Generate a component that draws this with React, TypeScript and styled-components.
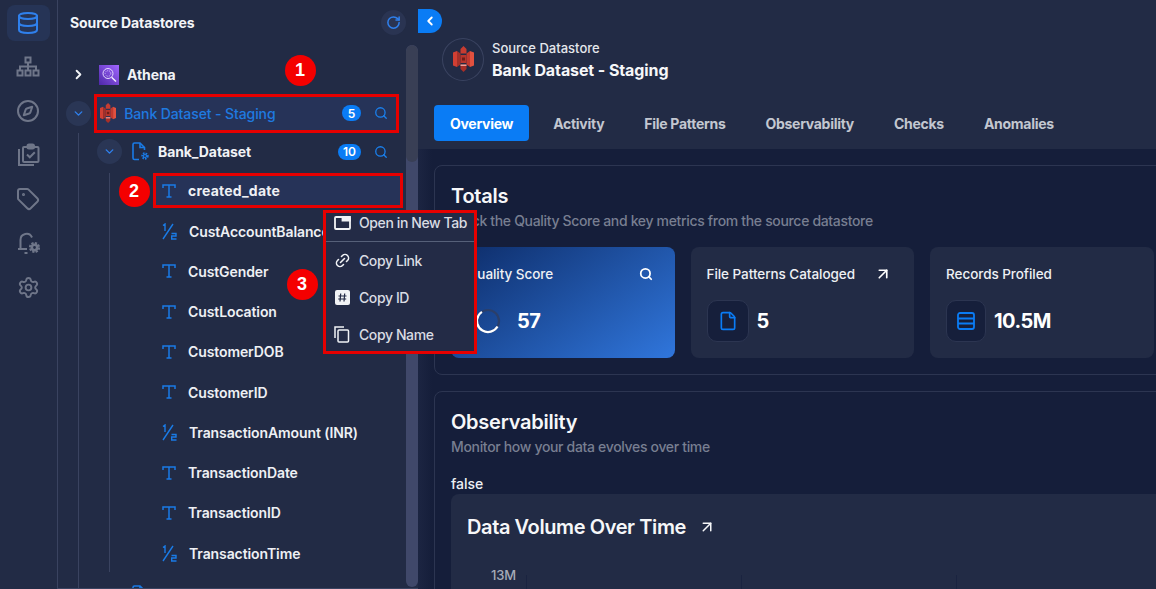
import React from 'react';
import styled, { createGlobalStyle } from 'styled-components';
import { ChevronRight, ChevronDown, ChevronLeft, Database, Compass, Tag, Settings, Search, RotateCw, ArrowUpRight, File, Link2 } from 'lucide-react';

const Global = createGlobalStyle`
  html, body { margin: 0; padding: 0; height: 589px; overflow: hidden; background: #222b45; }
  * { box-sizing: border-box; }
  body { font-family: "Inter", "Noto Sans", sans-serif; color: #f1f3f6; }
`;

const Page = styled.div`
  position: relative; display: flex; width: 1156px; height: 589px; overflow: hidden; background: #222b45;
`;
const Rail = styled.nav`
  flex: 0 0 58px; display: flex; flex-direction: column; align-items: center; gap: 8px;
  padding-top: 5px; border-right: 1px solid #3a4360;
`;
const RailItem = styled.div<{ $active?: boolean }>`
  width: 43px; height: 36px; border-radius: 8px; display: flex; align-items: center; justify-content: center;
  margin-left: -1px;
  color: ${p => (p.$active ? '#2f80ed' : '#6f7689')};
  background: ${p => (p.$active ? '#263456' : 'transparent')};
`;
const Sidebar = styled.aside`
  flex: 0 0 360px; display: flex; height: 589px; border-bottom: 1px solid #3a4360; overflow: hidden;
`;
const TreeColumn = styled.div`
  flex: 0 0 348px; min-width: 0;
`;
const SideHeader = styled.div`
  height: 44px; display: flex; align-items: center; justify-content: space-between; padding-left: 12px;
`;
const SideTitle = styled.h2`
  margin: 0; font-size: 14px; font-weight: 700; letter-spacing: -0.1px; color: #f3f5f8;
`;
const RoundButton = styled.div`
  width: 25px; height: 25px; border-radius: 50%; background: #2a3452; color: #2f80ed;
  display: flex; align-items: center; justify-content: center;
`;
const Tree = styled.div`
  padding: 11.5px 7px 0 8px;
`;
const Row = styled.div`
  display: flex; align-items: center; height: 38.5px;
`;
const Toggle = styled.div<{ $filled?: boolean }>`
  flex: 0 0 25px; height: 25px; border-radius: 50%; display: flex; align-items: center; justify-content: center;
  color: ${p => (p.$filled ? '#2f80ed' : '#f1f3f6')};
  background: ${p => (p.$filled ? '#2a3655' : 'transparent')};
`;
const RowBody = styled.div<{ $boxed?: boolean; $left?: number }>`
  flex: 1; height: 39px; display: flex; align-items: center; min-width: 0;
  margin-left: ${p => p.$left ?? 3}px; padding: 0 11px 0 5px; gap: 8px;
  ${p => p.$boxed && 'background: #263358; border: 3px solid #e60000; padding-left: 3px; padding-right: 8px;'}
`;
const RowLabel = styled.span<{ $blue?: boolean }>`
  flex: 1; font-size: 14px; font-weight: ${p => (p.$blue ? 500 : 700)}; white-space: nowrap; letter-spacing: -0.1px;
  color: ${p => (p.$blue ? '#1f7ae0' : '#f1f3f6')};
`;
const Count = styled.span`
  min-width: 19px; height: 16px; padding: 0 5px; border-radius: 8px; background: #0a7cf5; color: #fff;
  font-size: 12px; font-weight: 600; display: flex; align-items: center; justify-content: center; margin-right: 5px;
`;
const SearchMark = styled.span`
  color: #1a80ee; display: flex; width: 14px;
`;
const Children = styled.div`
  margin-left: 12px; border-left: 1px solid #3a4360; padding-left: 18px;
`;
const Leaves = styled.div`
  margin-left: 12px; border-left: 1px solid #3a4360; padding-left: 43px; margin-bottom: 3px; height: 399px;
`;
const Leaf = styled.div<{ $boxed?: boolean }>`
  display: flex; align-items: center; gap: 12px; height: 40.25px; padding-left: 9px;
  ${p => p.$boxed && 'height: 35px; margin: 2px -4px 3px 0; padding-left: 6px; background: #263358; border: 3px solid #e60000;'}
`;
const LeafIcon = styled.span`
  flex: 0 0 14px; display: flex; justify-content: center;
`;
const LeafLabel = styled.span<{ $boxed?: boolean }>`
  font-size: 14px; font-weight: ${p => (p.$boxed ? 700 : 600)}; letter-spacing: ${p => (p.$boxed ? '0.2px' : '-0.1px')}; white-space: nowrap; color: #eef0f4;
`;
const Scroll = styled.div`
  flex: 0 0 12px; margin-top: 45px; height: 542px; border-radius: 6px; background: #40486a; overflow: hidden;
`;
const ScrollThumb = styled.div`
  height: 117px; background: #393f55; border-radius: 6px;
`;
const Main = styled.main`
  position: relative; flex: 1; min-width: 0; display: flex; flex-direction: column; overflow: hidden;
`;
const CollapseTab = styled.div`
  position: absolute; left: 0; top: 9px; width: 24px; height: 24px; background: #0a7cf5; color: #fff;
  border-radius: 0 12px 12px 0; display: flex; align-items: center; justify-content: center;
`;
const Header = styled.header`
  flex: none; height: 149px; padding-top: 38px; background: #222b45;
`;
const Identity = styled.div`
  display: flex; align-items: center; gap: 8px; padding-left: 24px; height: 42px;
`;
const LogoRing = styled.div`
  width: 42px; height: 43px; flex: none; border-radius: 50%; border: 1px solid #3a4360; display: flex; align-items: center; justify-content: center;
`;
const IdText = styled.div`
  display: flex; flex-direction: column; gap: 3px;
`;
const IdKicker = styled.div`
  font-size: 13px; font-weight: 500; color: #e4e7ec; line-height: 18px; letter-spacing: 0;
`;
const IdName = styled.div`
  font-size: 16px; font-weight: 700; color: #f6f7f9; line-height: 20px; letter-spacing: -0.1px;
`;
const Tabs = styled.div`
  display: flex; gap: 8px; padding-left: 16px; margin-top: 25px;
`;
const TabItem = styled.div<{ $active?: boolean }>`
  height: 36px; padding: 0 16px; border-radius: 4px; display: flex; align-items: center;
  font-size: 14px; font-weight: 700; letter-spacing: -0.28px; white-space: nowrap;
  color: ${p => (p.$active ? '#fff' : '#c3c7d0')};
  background: ${p => (p.$active ? '#0a7cf5' : 'transparent')};
`;
const Content = styled.div`
  flex: 1; width: 800px; padding: 16px; background: linear-gradient(90deg, #1c2542 0, #151e3a 14px); display: flex; flex-direction: column; gap: 16px;
`;
const Section = styled.section`
  width: 770px; border: 1px solid #2c3551; border-radius: 8px; padding: 16px; flex: none;
`;
const SectionTitle = styled.h3`
  margin: 0; font-size: 20px; line-height: 28px; font-weight: 600; color: #f6f7f9; letter-spacing: -0.25px;
`;
const SectionSub = styled.p`
  margin: 1px 0 0; font-size: 14px; line-height: 20px; font-weight: 500; color: #787f91; white-space: nowrap; letter-spacing: -0.33px;
`;
const Stats = styled.div`
  display: grid; grid-template-columns: repeat(3, 223.5px); gap: 16px; margin-top: 16px;
`;
const Stat = styled.div<{ $hero?: boolean }>`
  height: 111px; border-radius: 8px; padding: 16px;
  background: ${p => (p.$hero ? 'linear-gradient(145deg, #0d2c68 0%, #3076dc 100%)' : '#222b45')};
`;
const StatHead = styled.div`
  display: flex; justify-content: space-between; align-items: center; height: 22px; font-size: 13.5px; font-weight: 500; color: #eef0f4; white-space: nowrap; letter-spacing: -0.05px;
`;
const HeadAction = styled.span`
  display: flex; padding-right: 6px; color: #fff;
`;
const StatBody = styled.div`
  display: flex; align-items: center; gap: 8px; margin-top: 15px;
`;
const IconTile = styled.div<{ $w?: number }>`
  width: ${p => p.$w ?? 42}px; height: 42px; border-radius: 10px; background: #161f3b; border: 1px solid #2c3551; color: #0a7cf5;
  display: flex; align-items: center; justify-content: center;
`;
const GaugeSlot = styled.div`
  width: 42px; height: 42px; display: flex; align-items: center; justify-content: center;
`;
const StatValue = styled.div`
  font-size: 20px; font-weight: 700; color: #fff; letter-spacing: -0.5px;
`;
const FalseText = styled.div`
  margin-top: 17px; font-size: 14px; line-height: 20px; color: #eef0f4; font-weight: 500;
`;
const ChartCard = styled.div`
  border-radius: 8px 8px 0 0; background: #222b45; padding: 19px 16px 0; height: 200px;
`;
const ChartTitle = styled.div`
  display: flex; align-items: center; gap: 12px; font-size: 20px; line-height: 28px; font-weight: 600; color: #f6f7f9; letter-spacing: -0.4px;
`;
const ChartArea = styled.div`
  display: flex; margin-top: 25px; padding-left: 24px; gap: 10px;
`;
const AxisLabel = styled.span`
  font-size: 13px; font-weight: 500; line-height: 18px; color: #a6abb8; letter-spacing: -0.2px;
`;
const Grid = styled.svg`
  display: block; margin-top: 9px; flex: none;
`;
const Menu = styled.div`
  position: absolute; left: 323px; top: 210px; width: 154px; height: 144px; background: #232b46; border: 3px solid #e60000; z-index: 5;
  display: flex; flex-direction: column; overflow: hidden;
`;
const MenuItem = styled.div<{ $divided?: boolean }>`
  display: flex; align-items: center; gap: 8px; padding-left: 7px; height: ${p => (p.$divided ? '29px' : '37px')}; font-size: 14px; font-weight: 500; color: #d9dce3;
  white-space: nowrap; letter-spacing: -0.4px; flex: none;
  ${p => p.$divided && 'border-bottom: 1px solid #566079; padding-bottom: 9px;'}
`;
const MenuIcon = styled.span`
  width: 18px; display: flex; justify-content: center; color: #f1f3f6; flex: none;
`;
const LinkGlyph = styled(Link2)`
  transform: rotate(-45deg);
`;
const Marker = styled.div<{ $x: number; $y: number }>`
  position: absolute; left: ${p => p.$x - 15.5}px; top: ${p => p.$y - 15.5}px; width: 31px; height: 31px; border-radius: 50%;
  background: #f40000; color: #fff; font-family: "Liberation Sans", sans-serif; font-size: 18px; font-weight: 700;
  display: flex; align-items: center; justify-content: center; z-index: 6;
`;

const S3 = ({ h = 20 }: { h?: number }) => (
  <svg width={(h * 21) / 26} height={h} viewBox="0 0 21 26">
    <path d="M0 6.500L4 5V21L0 19.500Z" fill="#d13f33" />
    <path d="M4 5L7.500 7.500V18.500L4 21Z" fill="#a3302a" />
    <path d="M21 6.500L17 5V21L21 19.500Z" fill="#e2513f" />
    <path d="M17 5L13.500 7.500V18.500L17 21Z" fill="#c2392f" />
    <path d="M7.500 3L10.500 0L13.500 3V7.500H7.500Z" fill="#c63c31" />
    <path d="M7.500 18.500H13.500V23L10.500 26L7.500 23Z" fill="#a82f28" />
    <path d="M7.500 18.500H13.500V20H7.500Z" fill="#eda39a" />
    <path d="M7.500 9H13.500V17H7.500Z" fill="#b8352c" />
    <path d="M9 11.500H12V14.500H9Z" fill="#6e1d18" />
  </svg>
);
const Athena = () => (
  <svg width="20" height="20" viewBox="0 0 20 20">
    <defs>
      <linearGradient id="ath" x1="0" y1="1" x2="1" y2="0">
        <stop offset="0" stopColor="#4d27a8" />
        <stop offset="1" stopColor="#a166ff" />
      </linearGradient>
    </defs>
    <rect width="20" height="20" fill="url(#ath)" />
    <circle cx="9" cy="8.500" r="5" fill="none" stroke="#e4d8ff" strokeWidth="1" />
    <circle cx="9" cy="8.500" r="2.800" fill="none" stroke="#e4d8ff" strokeWidth="0.800" strokeDasharray="1 1" />
    <path d="M12.600 12.200L17 16.500" stroke="#f3ecff" strokeWidth="1.400" />
  </svg>
);
const SiteMap = () => (
  <svg width="24" height="22" viewBox="0 0 24 22" fill="none" stroke="currentColor" strokeWidth="2">
    <rect x="9.500" y="1.500" width="5" height="5" />
    <rect x="1.500" y="14.500" width="5" height="5" />
    <rect x="9.500" y="14.500" width="5" height="5" />
    <rect x="17.500" y="14.500" width="5" height="5" />
    <path d="M12 7v7M4 14v-3.500h16V14" />
  </svg>
);
const Tasks = () => (
  <svg width="23" height="24" viewBox="0 0 23 24" fill="none" stroke="currentColor" strokeWidth="2">
    <path d="M2 6v16h15" />
    <rect x="6" y="4" width="15.500" height="15" rx="1" />
    <rect x="10.500" y="1.500" width="6.500" height="4" rx="1.500" fill="currentColor" />
    <path d="M10 11.500l2.800 2.800 5-5" />
  </svg>
);
const BellGear = () => (
  <svg width="24" height="24" viewBox="0 0 24 24" fill="none" stroke="currentColor" strokeWidth="2">
    <path d="M2 18h2.500V9a6 6 0 0 1 11.500-2.500" />
    <path d="M4.500 18H11" />
    <path d="M8.500 22h3" />
    <circle cx="18.500" cy="16.500" r="4.500" strokeWidth="2.200" strokeDasharray="2.200 1.300" />
    <circle cx="18.500" cy="16.500" r="2.700" strokeWidth="2.600" />
  </svg>
);
const TypeText = () => (
  <svg width="14" height="14" viewBox="0 0 14 14" fill="none" stroke="#1a7be6" strokeWidth="1.500">
    <path d="M1 4V1h12v3M7 1v12M4.500 13h5" />
  </svg>
);
const TypeNumber = () => (
  <svg width="15" height="17" viewBox="0 0 15 17" fill="none" stroke="#1a7be6" strokeWidth="1.400">
    <path d="M1 2.500L3 1v7M1 16L11 1M9.500 10.500h4.500v2.500H9.700v3h4.800" />
  </svg>
);
const FileGear = () => (
  <svg width="18" height="19" viewBox="0 0 18 19" fill="none" stroke="#1a7be6" strokeWidth="1.600">
    <path d="M7 17.500H2.500a1.500 1.500 0 0 1-1.500-1.500V2.500A1.500 1.500 0 0 1 2.500 1H8l4.500 4.500V8" />
    <path d="M8 1v4.500h4.500" />
    <circle cx="13" cy="14" r="2.600" strokeWidth="2.200" strokeDasharray="1.500 1" />
    <circle cx="13" cy="14" r="1.500" strokeWidth="1.200" />
  </svg>
);
const OpenTab = () => (
  <svg width="17" height="14" viewBox="0 0 17 14" fill="none" stroke="currentColor" strokeWidth="1.800">
    <rect x="1" y="1" width="15" height="12" rx="1" />
    <path d="M8.500 1h7.500v3.500H8.500z" fill="currentColor" />
  </svg>
);
const HashTile = () => (
  <svg width="15" height="15" viewBox="0 0 15 15">
    <rect width="15" height="15" rx="2" fill="currentColor" />
    <path d="M5.700 3.500L5 11.500M9.700 3.500L9 11.500M3.500 6h8M3.200 9h8" stroke="#232b46" strokeWidth="1.200" fill="none" />
  </svg>
);
const CopyPages = () => (
  <svg width="16" height="17" viewBox="0 0 16 17" fill="none" stroke="currentColor" strokeWidth="1.500">
    <path d="M1 12V1h9" />
    <rect x="4" y="4" width="10.500" height="12" rx="1" />
  </svg>
);
const Rows3 = () => (
  <svg width="18" height="18" viewBox="0 0 18 18" fill="none" stroke="currentColor" strokeWidth="1.800">
    <rect x="1" y="1" width="16" height="16" rx="2" />
    <path d="M1 6.500h16M1 11.500h16" />
  </svg>
);
const Gauge = () => (
  <svg width="26" height="26" viewBox="0 0 26 26" fill="none" strokeWidth="2.200">
    <circle cx="13" cy="13" r="11" stroke="#2b3f6a" />
    <circle cx="13" cy="13" r="11" stroke="#fff" strokeDasharray="39.400 69.100" transform="rotate(-270 13 13) rotate(-60 13 13)" />
  </svg>
);

const leaves: { name: string; num?: boolean }[] = [
  { name: 'CustAccountBalance', num: true },
  { name: 'CustGender' },
  { name: 'CustLocation' },
  { name: 'CustomerDOB' },
  { name: 'CustomerID' },
  { name: 'TransactionAmount (INR)', num: true },
  { name: 'TransactionDate' },
  { name: 'TransactionID' },
  { name: 'TransactionTime', num: true },
];

export default function App() {
  return (
    <Page>
      <Global />
      <Rail>
        <RailItem $active><Database size={24} strokeWidth={2} /></RailItem>
        <RailItem><SiteMap /></RailItem>
        <RailItem><Compass size={24} strokeWidth={2} /></RailItem>
        <RailItem><Tasks /></RailItem>
        <RailItem><Tag size={24} strokeWidth={2} /></RailItem>
        <RailItem><BellGear /></RailItem>
        <RailItem><Settings size={23} strokeWidth={2} /></RailItem>
      </Rail>
      <Sidebar>
        <TreeColumn>
          <SideHeader>
            <SideTitle>Source Datastores</SideTitle>
            <RoundButton><RotateCw size={15} strokeWidth={2.4} /></RoundButton>
          </SideHeader>
          <Tree>
            <Row>
              <Toggle><ChevronRight size={15} strokeWidth={3} /></Toggle>
              <RowBody $left={3}><Athena /><RowLabel>Athena</RowLabel></RowBody>
            </Row>
            <Row>
              <Toggle $filled><ChevronDown size={13} strokeWidth={2.6} /></Toggle>
              <RowBody $boxed><S3 /><RowLabel $blue>Bank Dataset - Staging</RowLabel><Count>5</Count><SearchMark><Search size={14} strokeWidth={2.2} /></SearchMark></RowBody>
            </Row>
            <Children>
              <Row>
                <Toggle $filled><ChevronDown size={13} strokeWidth={2.6} /></Toggle>
                <RowBody $left={5}><FileGear /><RowLabel>Bank_Dataset</RowLabel><Count>10</Count><SearchMark><Search size={14} strokeWidth={2.2} /></SearchMark></RowBody>
              </Row>
              <Leaves>
                <Leaf $boxed><LeafIcon><TypeText /></LeafIcon><LeafLabel $boxed>created_date</LeafLabel></Leaf>
                {leaves.map(l => (
                  <Leaf key={l.name}>
                    <LeafIcon>{l.num ? <TypeNumber /> : <TypeText />}</LeafIcon>
                    <LeafLabel>{l.name}</LeafLabel>
                  </Leaf>
                ))}
              </Leaves>
              <Row>
                <Toggle><ChevronRight size={13} strokeWidth={2.6} /></Toggle>
                <RowBody $left={5}><FileGear /><RowLabel>Bank Transaction Generated Files</RowLabel></RowBody>
              </Row>
            </Children>
          </Tree>
        </TreeColumn>
        <Scroll><ScrollThumb /></Scroll>
      </Sidebar>
      <Main>
        <CollapseTab><ChevronLeft size={14} strokeWidth={3.2} /></CollapseTab>
        <Header>
          <Identity>
            <LogoRing><S3 h={26} /></LogoRing>
            <IdText>
              <IdKicker>Source Datastore</IdKicker>
              <IdName>Bank Dataset - Staging</IdName>
            </IdText>
          </Identity>
          <Tabs>
            <TabItem $active>Overview</TabItem>
            <TabItem>Activity</TabItem>
            <TabItem>File Patterns</TabItem>
            <TabItem>Observability</TabItem>
            <TabItem>Checks</TabItem>
            <TabItem>Anomalies</TabItem>
          </Tabs>
        </Header>
        <Content>
          <Section>
            <SectionTitle>Totals</SectionTitle>
            <SectionSub>Track the Quality Score and key metrics from the source datastore</SectionSub>
            <Stats>
              <Stat $hero>
                <StatHead>Quality Score<HeadAction><Search size={14} strokeWidth={3} /></HeadAction></StatHead>
                <StatBody><GaugeSlot><Gauge /></GaugeSlot><StatValue>57</StatValue></StatBody>
              </Stat>
              <Stat>
                <StatHead>File Patterns Cataloged<HeadAction><ArrowUpRight size={18} strokeWidth={2.2} /></HeadAction></StatHead>
                <StatBody><IconTile><File size={20} strokeWidth={2} /></IconTile><StatValue>5</StatValue></StatBody>
              </Stat>
              <Stat>
                <StatHead>Records Profiled</StatHead>
                <StatBody><IconTile $w={40}><Rows3 /></IconTile><StatValue>10.5M</StatValue></StatBody>
              </Stat>
            </Stats>
          </Section>
          <Section>
            <SectionTitle>Observability</SectionTitle>
            <SectionSub>Monitor how your data evolves over time</SectionSub>
            <FalseText>false</FalseText>
            <ChartCard>
              <ChartTitle>Data Volume Over Time<ArrowUpRight size={18} strokeWidth={2} /></ChartTitle>
              <ChartArea>
                <AxisLabel>13M</AxisLabel>
                <Grid width="640" height="40" viewBox="0 0 640 40">
                  <path d="M0.500 0V40M215.500 0V40M430.500 0V40" stroke="#1a2340" fill="none" />
                </Grid>
              </ChartArea>
            </ChartCard>
          </Section>
        </Content>
      </Main>
      <Menu>
        <MenuItem $divided><MenuIcon><OpenTab /></MenuIcon>Open in New Tab</MenuItem>
        <MenuItem><MenuIcon><LinkGlyph size={17} strokeWidth={2.2} /></MenuIcon>Copy Link</MenuItem>
        <MenuItem><MenuIcon><HashTile /></MenuIcon>Copy ID</MenuItem>
        <MenuItem><MenuIcon><CopyPages /></MenuIcon>Copy Name</MenuItem>
      </Menu>
      <Marker $x={300} $y={70}>1</Marker>
      <Marker $x={134} $y={191}>2</Marker>
      <Marker $x={302} $y={284}>3</Marker>
    </Page>
  );
}
